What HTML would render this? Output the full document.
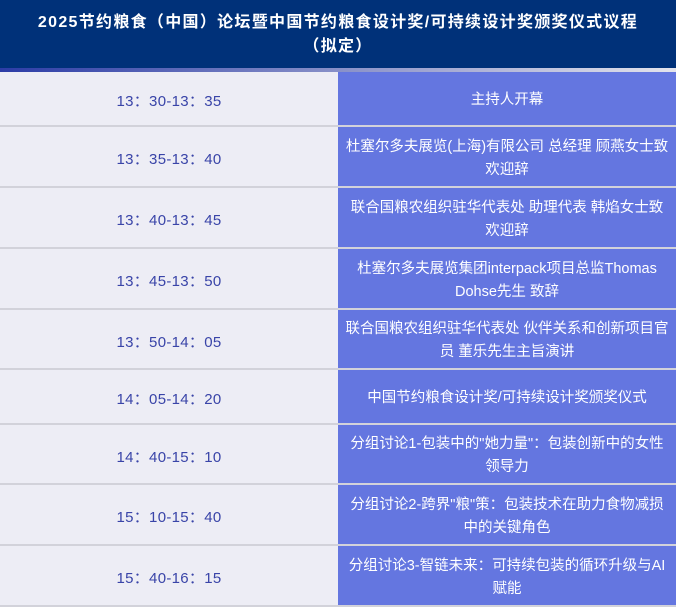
<!DOCTYPE html>
<html><head><meta charset="utf-8"><style>
*{margin:0;padding:0;box-sizing:border-box}
body{width:676px;height:607px;overflow:hidden;background:#ededf5;font-family:"Liberation Sans","Noto Sans CJK SC",sans-serif}
.hd{height:68px;background:#003179;color:#fff;font-weight:bold;font-size:16px;letter-spacing:1.3px;text-align:center;line-height:24px;padding-top:11px}
.bar{height:4px;background:linear-gradient(90deg,#2c3ca6,#8890c8 50%,#e4e4ec)}
.r{display:flex;border-bottom:2px solid #d2d2da}
.l{width:338px;display:flex;align-items:center;justify-content:center;color:#3944a8;font-size:15px;letter-spacing:0.3px;background:#ededf5;padding-top:4px}
.c{width:338px;display:flex;align-items:center;justify-content:center;text-align:center;color:#fff;font-size:14.5px;line-height:23px;background:#6476e0;padding:4px 4px 0}
</style></head><body>
<div class="hd">2025节约粮食（中国）论坛暨中国节约粮食设计奖/可持续设计奖颁奖仪式议程<br>（拟定）</div>
<div class="bar"></div>
<div class="r" style="height:55px"><div class="l">13：30-13：35</div><div class="c">主持人开幕</div></div>
<div class="r" style="height:61px"><div class="l">13：35-13：40</div><div class="c">杜塞尔多夫展览(上海)有限公司 总经理 顾燕女士致<br>欢迎辞</div></div>
<div class="r" style="height:61px"><div class="l">13：40-13：45</div><div class="c">联合国粮农组织驻华代表处 助理代表 韩焰女士致<br>欢迎辞</div></div>
<div class="r" style="height:61px"><div class="l">13：45-13：50</div><div class="c">杜塞尔多夫展览集团interpack项目总监Thomas<br>Dohse先生 致辞</div></div>
<div class="r" style="height:60px"><div class="l">13：50-14：05</div><div class="c">联合国粮农组织驻华代表处 伙伴关系和创新项目官<br>员 董乐先生主旨演讲</div></div>
<div class="r" style="height:55px"><div class="l">14：05-14：20</div><div class="c">中国节约粮食设计奖/可持续设计奖颁奖仪式</div></div>
<div class="r" style="height:60px"><div class="l">14：40-15：10</div><div class="c">分组讨论1-包装中的"她力量"：包装创新中的女性<br>领导力</div></div>
<div class="r" style="height:61px"><div class="l">15：10-15：40</div><div class="c">分组讨论2-跨界"粮"策：包装技术在助力食物减损<br>中的关键角色</div></div>
<div class="r" style="height:61px"><div class="l">15：40-16：15</div><div class="c">分组讨论3-智链未来：可持续包装的循环升级与AI<br>赋能</div></div>
</body></html>
